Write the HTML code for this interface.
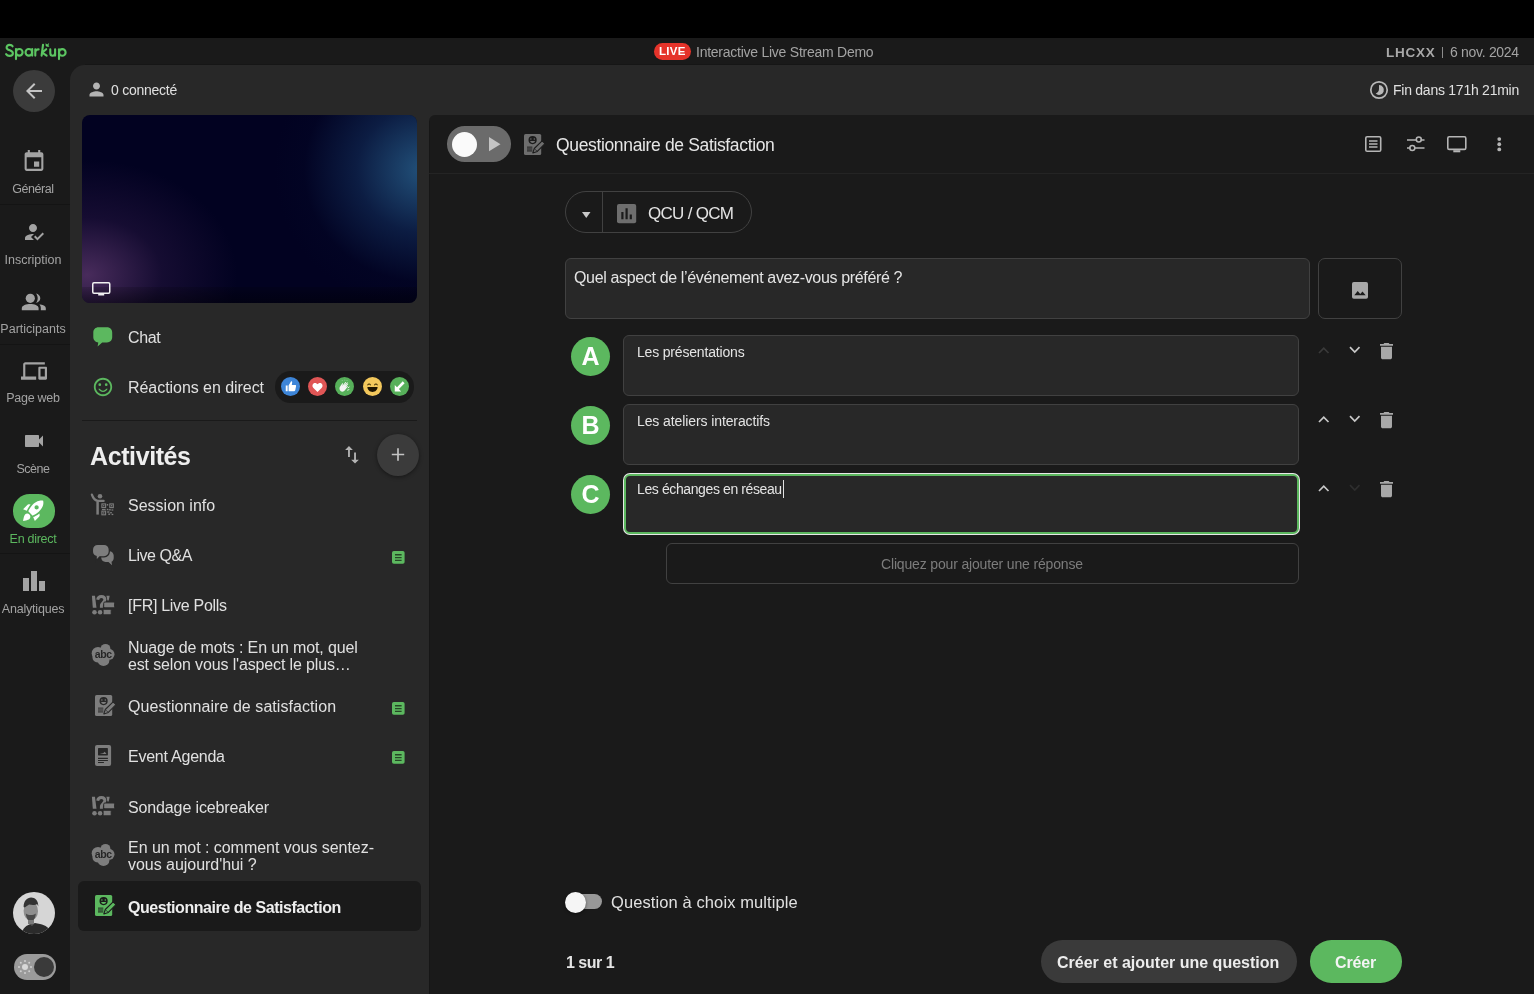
<!DOCTYPE html>
<html><head><meta charset="utf-8">
<style>
*{box-sizing:border-box;margin:0;padding:0}
html,body{width:1534px;height:994px;overflow:hidden;background:#000;font-family:"Liberation Sans",sans-serif;color:#e6e6e6;position:relative}
.a{position:absolute}
.t{white-space:nowrap;-webkit-font-smoothing:antialiased;will-change:transform}
svg{display:block;overflow:visible}
</style></head><body><div class="a" style="left:0;top:0;width:1534px;height:994px;will-change:transform">
<div class="a" style="left:0px;top:38px;width:1534px;height:956px;background:#1a1a1a;border-radius:0px;"></div>
<div class="a" style="left:85px;top:64px;width:1449px;height:1px;background:#161616;border-radius:0px;"></div>
<div class="a" style="left:70px;top:65px;width:1464px;height:929px;background:#282828;border-radius:15px 0 0 0px;"></div>
<div class="a" style="left:429px;top:115px;width:1105px;height:879px;background:#1a1a1a;border-radius:6px 0 0 0px;"></div>
<div class="a" style="left:429px;top:121px;width:1px;height:873px;background:#161616;border-radius:0px;"></div>
<div class="a" style="left:429px;top:173px;width:1105px;height:1px;background:#242424;border-radius:0px;"></div>
<svg class="a" style="left:0px;top:38px;" width="70" height="24" viewBox="0 38 70 24"><g fill="none" stroke="#5cc662" stroke-width="2.1" stroke-linecap="round" stroke-linejoin="round"><path d="M12.6 46.3C12 45.2 11 44.9 9.6 44.9 7.8 44.9 6.6 45.9 6.6 47.4 6.6 51 12.9 49.6 12.9 53.2 12.9 54.9 11.5 55.9 9.5 55.9 7.9 55.9 6.8 55.2 6.1 54.1"/><circle cx="19.3" cy="52.3" r="3.3"/><path d="M16 49V59.1"/><circle cx="28.8" cy="52.3" r="3.3"/><path d="M32.2 49V55.6"/><path d="M35.3 55.6V49.3M35.3 51.6C35.8 50 37 49.4 38.6 49.4"/><path d="M43 44.8L41.6 55.6M46.2 49.2L42.2 52.6 46.6 55.6"/><path d="M50.3 49.4V52.9C50.3 54.7 51.3 55.7 52.7 55.7 54.1 55.7 55.1 54.7 55.1 52.9V49.4M55.1 52.5V55.6"/><circle cx="62.3" cy="52.4" r="3.3"/><path d="M59 49.3V59.1"/></g><path d="M45.6 43.3l1.6 1.1 1.9-1.4-.6 2.3.9 1.4h-2.1c-1.2 0-1.9-.9-1.7-1.9z" fill="#5cc662"/></svg>
<div class="a" style="left:654px;top:42.5px;width:37px;height:17.5px;background:#e5332a;border-radius:8.75px;"></div>
<div class="a t" style="left:659.30px;top:46.00px;font-size:11.5px;line-height:11.5px;color:#ffffff;font-weight:700;letter-spacing:0.25px;">LIVE</div>
<div class="a t" style="left:696.00px;top:45.00px;font-size:14px;line-height:14px;color:#a3a3a3;font-weight:400;letter-spacing:-0.25px;">Interactive Live Stream Demo</div>
<div class="a t" style="left:1385.60px;top:46.00px;font-size:13.5px;line-height:13.5px;color:#a8a8a8;font-weight:700;letter-spacing:0.75px;">LHCXX</div>
<div class="a" style="left:1441.8px;top:47px;width:1.6px;height:10.6px;background:#8c8c8c;border-radius:0px;"></div>
<div class="a t" style="left:1449.80px;top:45.00px;font-size:14px;line-height:14px;color:#a3a3a3;font-weight:400;letter-spacing:-0.3px;">6 nov. 2024</div>
<div class="a" style="left:13px;top:70px;width:42px;height:42px;background:#3b3b3b;border-radius:21px;"></div>
<svg class="a" style="left:22px;top:79px;" width="24" height="24" viewBox="0 0 24 24"><path fill="#c4c4c4" d="M20 11H7.83l5.59-5.59L12 4l-8 8 8 8 1.41-1.41L7.83 13H20v-2z"/></svg>
<div class="a" style="left:0px;top:204px;width:70px;height:1px;background:#141414;border-radius:0px;"></div>
<div class="a" style="left:0px;top:344px;width:70px;height:1px;background:#141414;border-radius:0px;"></div>
<div class="a" style="left:0px;top:553px;width:70px;height:1px;background:#141414;border-radius:0px;"></div>
<svg class="a" style="left:21px;top:149px;" width="26" height="25" viewBox="0 0 24 24"><path fill="#a3a3a3" d="M17 12h-5v5h5v-5zM16 1v2H8V1H6v2H5c-1.11 0-1.99.9-1.99 2L3 19c0 1.1.89 2 2 2h14c1.1 0 2-.9 2-2V5c0-1.1-.9-2-2-2h-1V1h-2zm3 18H5V8h14v11z"/></svg>
<div class="a t" style="left:-1.7px;width:70px;text-align:center;top:183px;font-size:12.5px;line-height:12.5px;color:#a3a3a3;letter-spacing:-0.45px">Général</div>
<svg class="a" style="left:22px;top:220px;" width="24" height="24" viewBox="0 0 24 24"><path fill="#a3a3a3" d="M9 17l3-2.94c-.39-.04-.68-.06-1-.06-2.67 0-8 1.34-8 4v2h9l-3-3zm2-5c2.21 0 4-1.79 4-4s-1.79-4-4-4-4 1.79-4 4 1.79 4 4 4m4.47 8.5L12 17l1.4-1.41 2.07 2.08 5.13-5.17 1.4 1.41-6.6 6.59z"/></svg>
<div class="a t" style="left:-1.7px;width:70px;text-align:center;top:254px;font-size:12.5px;line-height:12.5px;color:#a3a3a3;letter-spacing:0px">Inscription</div>
<svg class="a" style="left:0px;top:280px;" width="70" height="40" viewBox="0 280 70 40"><g fill="#a3a3a3"><circle cx="30.3" cy="298.3" r="4.6"/><path d="M36 293.6c2.4.4 4.3 2.4 4.3 4.7s-1.9 4.3-4.3 4.7c1.1-1.3 1.7-2.9 1.7-4.7s-.6-3.4-1.7-4.7z"/><path d="M21.8 310.3v-2.2c0-2.6 4.6-4.1 8.5-4.1s8.3 1.5 8.3 4.1v2.2z"/><path d="M40.6 304.4c2.9.5 5.2 1.7 5.2 3.7v2.2h-5v-2.2c0-1.4-.5-2.6-1.4-3.5z"/></g></svg>
<div class="a t" style="left:-1.7px;width:70px;text-align:center;top:323px;font-size:12.5px;line-height:12.5px;color:#a3a3a3;letter-spacing:0px">Participants</div>
<svg class="a" style="left:21px;top:358px;" width="26" height="26" viewBox="0 0 24 24"><path fill="#a3a3a3" d="M4 6h18V4H4c-1.1 0-2 .9-2 2v11H0v3h14v-3H4V6zm19 2h-6c-.55 0-1 .45-1 1v10c0 .55.45 1 1 1h6c.55 0 1-.45 1-1V9c0-.55-.45-1-1-1zm-1 9h-4v-7h4v7z"/></svg>
<div class="a t" style="left:-1.7px;width:70px;text-align:center;top:392px;font-size:12.5px;line-height:12.5px;color:#a3a3a3;letter-spacing:-0.28px">Page web</div>
<svg class="a" style="left:22px;top:429px;" width="24" height="24" viewBox="0 0 24 24"><path fill="#a3a3a3" d="M17 10.5V7c0-.55-.45-1-1-1H4c-.55 0-1 .45-1 1v10c0 .55.45 1 1 1h12c.55 0 1-.45 1-1v-3.5l4 4v-11l-4 4z"/></svg>
<div class="a t" style="left:-1.7px;width:70px;text-align:center;top:463px;font-size:12.5px;line-height:12.5px;color:#a3a3a3;letter-spacing:-0.45px">Scène</div>
<div class="a" style="left:13px;top:494.4px;width:42px;height:33.4px;background:#5cb85f;border-radius:16.7px;"></div>
<svg class="a" style="left:21.4px;top:498.3px;" width="25" height="25" viewBox="0 0 24 24"><path fill="#ffffff" d="M9.19 6.35c-2.04 2.29-3.44 5.58-3.57 5.89L2 10.69l4.05-4.05c.47-.47 1.15-.68 1.81-.55l1.33.26zM11.17 17s3.74-1.55 5.89-3.7c5.4-5.4 4.5-9.62 4.21-10.57-.95-.3-5.17-1.19-10.57 4.21C8.55 9.09 7 12.83 7 12.83L11.17 17zm6.48-2.19c-2.29 2.04-5.58 3.44-5.89 3.57L13.31 22l4.05-4.05c.47-.47.68-1.15.55-1.81l-.26-1.33zM9 18c0 .83-.34 1.58-.88 2.12C6.94 21.3 2 22 2 22s.7-4.94 1.88-6.12C4.42 15.34 5.17 15 6 15c1.66 0 3 1.34 3 3zm4-9c0-1.1.9-2 2-2s2 .9 2 2-.9 2-2 2-2-.9-2-2z"/></svg>
<div class="a t" style="left:-1.7px;width:70px;text-align:center;top:533px;font-size:12.5px;line-height:12.5px;color:#5cb85f;letter-spacing:-0.28px">En direct</div>
<svg class="a" style="left:23px;top:571px;" width="22" height="20" viewBox="0 0 22 20"><path fill="#a3a3a3" d="M0 7h6v13H0zM8 0h6v20H8zM16 10h6v10h-6z"/></svg>
<div class="a t" style="left:-1.7px;width:70px;text-align:center;top:603px;font-size:12.5px;line-height:12.5px;color:#a3a3a3;letter-spacing:-0.2px">Analytiques</div>
<svg class="a" style="left:13px;top:892px;" width="42" height="42" viewBox="0 0 42 42"><defs><clipPath id="avc"><circle cx="21" cy="21" r="21"/></clipPath></defs><g clip-path="url(#avc)"><rect width="42" height="42" fill="#d6d6d6"/><path d="M8 44c1-7 5-11 10-12l4-1 5 1c6 1 11 5 13 12z" fill="#2b2b2b"/><path d="M15 31l4 3 3-3z" fill="#555"/><ellipse cx="17.8" cy="19" rx="7.2" ry="9.5" fill="#8f8f8f"/><path d="M10.6 15c0-6 3.5-9.5 7.5-9.5s7.3 3 7.2 9l-1.2-2.5c-1.5 1-4.5 1.3-8 .5l-4.5 3z" fill="#333"/><path d="M12.8 21.5c.5 5 2.5 7.8 5 7.8s4.6-2.8 5-7.8c-1.5 1.2-3 1.6-5 1.6s-3.5-.4-5-1.6z" fill="#4a4a4a"/><rect x="15" y="28" width="6" height="4" fill="#7a7a7a"/></g></svg>
<div class="a" style="left:14px;top:954px;width:42px;height:26px;background:#9b9b9b;border-radius:13px;"></div>
<div class="a" style="left:33.5px;top:957px;width:20px;height:20px;border-radius:10px;background:#3a3a3a"></div>
<svg class="a" style="left:17px;top:959px;" width="16" height="16" viewBox="0 0 16 16"><circle cx="8" cy="8" r="3" fill="#d8d8d8"/><g fill="#cfcfcf"><circle cx="8" cy="2" r="1"/><circle cx="8" cy="14" r="1"/><circle cx="2" cy="8" r="1"/><circle cx="14" cy="8" r="1"/><circle cx="3.8" cy="3.8" r="1"/><circle cx="12.2" cy="12.2" r="1"/><circle cx="3.8" cy="12.2" r="1"/><circle cx="12.2" cy="3.8" r="1"/></g></svg>
<svg class="a" style="left:86px;top:79px;" width="21" height="21" viewBox="0 0 24 24"><path fill="#b3b3b3" d="M12 12c2.21 0 4-1.79 4-4s-1.79-4-4-4-4 1.79-4 4 1.79 4 4 4zm0 2c-2.67 0-8 1.34-8 4v2h16v-2c0-2.66-5.33-4-8-4z"/></svg>
<div class="a t" style="left:111.00px;top:83.00px;font-size:14px;line-height:14px;color:#e0e0e0;font-weight:400;letter-spacing:-0.25px;">0 connecté</div>
<div class="a t" style="left:1393.00px;top:83.00px;font-size:14px;line-height:14px;color:#e0e0e0;font-weight:400;letter-spacing:-0.25px;">Fin dans 171h 21min</div>
<svg class="a" style="left:1369px;top:80px;" width="20" height="20" viewBox="0 0 20 20"><circle cx="10" cy="10" r="8.2" fill="none" stroke="#b8b8b8" stroke-width="1.7"/><path d="M10 5.1A4.9 4.9 0 1 1 6.7 13.6C8.8 12.6 10 11.2 10 9z" fill="#b8b8b8"/></svg>
<div class="a" style="left:82px;top:115px;width:335px;height:188px;border-radius:8px;overflow:hidden;background:#020221"><div class="a" style="left:0;top:0;width:335px;height:188px;background:radial-gradient(ellipse 150px 140px at 342px 55px,rgba(36,86,128,0.95),rgba(22,55,100,0.5) 45%,rgba(5,15,50,0.15) 80%,rgba(0,0,0,0) 100%)"></div><div class="a" style="left:0;top:0;width:335px;height:188px;background:radial-gradient(ellipse 150px 115px at 5px 160px,rgba(80,48,98,0.9),rgba(45,25,70,0.45) 50%,rgba(0,0,0,0) 100%)"></div><div class="a" style="left:0;top:172px;width:335px;height:16px;background:linear-gradient(rgba(0,0,0,0.15),rgba(0,0,0,0.45))"></div></div>
<svg class="a" style="left:92px;top:281.5px;" width="18.5" height="13.5" viewBox="0 0 18.5 13.5"><rect x=".75" y=".75" width="17" height="10.5" rx="1.2" fill="none" stroke="#f0f0f0" stroke-width="1.5"/><rect x="6.2" y="11.5" width="6" height="2" fill="#f0f0f0"/></svg>
<svg class="a" style="left:93px;top:326.5px;" width="20" height="20" viewBox="0 0 20 20"><path fill="#5cb85f" d="M5.5 0.3h8.5c3 0 5.2 2.2 5.2 5.2v4.8c0 3-2.2 5.2-5.2 5.2H9.2L4.6 19.6l.7-4.1C2.5 15.2.3 13.2.3 10.3V5.5C.3 2.5 2.5.3 5.5.3z"/></svg>
<div class="a t" style="left:127.50px;top:330.00px;font-size:16px;line-height:16px;color:#e0e0e0;font-weight:400;letter-spacing:-0.35px;">Chat</div>
<svg class="a" style="left:91.5px;top:375.5px;" width="22" height="22" viewBox="0 0 24 24"><path fill="#5cb85f" d="M15.5 9.5m-1.5 0a1.5 1.5 0 1 0 3 0a1.5 1.5 0 1 0-3 0M8.5 9.5m-1.5 0a1.5 1.5 0 1 0 3 0a1.5 1.5 0 1 0-3 0M11.99 2C6.47 2 2 6.48 2 12s4.47 10 9.99 10C17.52 22 22 17.52 22 12S17.52 2 11.99 2zM12 20c-4.42 0-8-3.58-8-8s3.58-8 8-8 8 3.58 8 8-3.58 8-8 8zm0-4c-1.48 0-2.75-.81-3.45-2H6.88c.8 2.05 2.79 3.5 5.12 3.5s4.32-1.45 5.12-3.5h-1.67c-.7 1.19-1.97 2-3.45 2z"/></svg>
<div class="a t" style="left:127.50px;top:380.00px;font-size:16px;line-height:16px;color:#e0e0e0;font-weight:400;letter-spacing:-0.05px;">Réactions en direct</div>
<div class="a" style="left:274.5px;top:371px;width:139.5px;height:31.5px;background:#1a1a1a;border-radius:15.7px;"></div>
<svg class="a" style="left:280.7px;top:377px" width="19" height="19" viewBox="0 0 20 20"><circle cx="10" cy="10" r="10" fill="#3d85d8"/><path fill="#fff" d="M5 9h2v6H5zM8 9l2.5-4.2c.4-.6 1.3-.3 1.3.4L11.4 8.3H15c.6 0 1 .5.9 1.1l-.9 4.6c-.1.5-.5.9-1 .9H8z"/></svg>
<svg class="a" style="left:307.8px;top:377px" width="19" height="19" viewBox="0 0 20 20"><circle cx="10" cy="10" r="10" fill="#e05656"/><path fill="#fff" d="M10 15.8l-4.3-4.2C4.1 10 4.4 7.2 6.5 6.4c1.4-.5 2.7.1 3.5 1.3.8-1.2 2.1-1.8 3.5-1.3 2.1.8 2.4 3.6.8 5.2z"/></svg>
<svg class="a" style="left:335.1px;top:377px" width="19" height="19" viewBox="0 0 20 20"><circle cx="10" cy="10" r="10" fill="#57b05a"/><path fill="#f4f4f4" d="M6.2 15c-1.6-1.4-1.9-3.3-1-4.7l2.5-3.6c.4-.5 1 0 .8.5L7.6 9.4l3.2-3.9c.4-.5 1.1.1.8.6L9.3 9.2l3.3-3.5c.4-.4 1 .1.7.6l-2.6 3.2 2.5-2.5c.4-.4 1 .1.6.6L11 11.2l1.7-1.5c.4-.4 1 .1.7.6l-2.8 3.5C9.3 15.5 7.5 16 6.2 15z"/><path d="M13.5 11.5l1.8-1.2M12.8 14l2.3-.9" stroke="#f4f4f4" stroke-width=".9"/><path d="M7.5 3.2l.3 1M10.2 2.8v1M12.8 3.2l-.3 1" stroke="#9ad49c" stroke-width=".7"/></svg>
<svg class="a" style="left:362.5px;top:377px" width="19" height="19" viewBox="0 0 20 20"><circle cx="10" cy="10" r="10" fill="#f3c85c"/><path d="M5 8.3c.6-1.2 2.2-1.2 2.8 0M12.2 8.3c.6-1.2 2.2-1.2 2.8 0" fill="none" stroke="#3a2a00" stroke-width="1.1" stroke-linecap="round"/><path d="M4.6 10.6h10.8c-.2 3-2.4 5.2-5.4 5.2s-5.2-2.2-5.4-5.2z" fill="#1e1400"/></svg>
<svg class="a" style="left:389.5px;top:377px" width="19" height="19" viewBox="0 0 20 20"><circle cx="10" cy="10" r="10" fill="#57b05a"/><path fill="#fff" d="M5 15.2V8.4l2.4 2.3 6-6.1 2 2-6 6.1 2.3 2.5z"/></svg>
<div class="a" style="left:82px;top:419.5px;width:335px;height:1.5px;background:#1a1a1a;border-radius:0px;"></div>
<div class="a t" style="left:90.00px;top:444.00px;font-size:25px;line-height:25px;color:#eeeeee;font-weight:700;letter-spacing:-0.4px;">Activités</div>
<svg class="a" style="left:341.2px;top:443.8px;" width="22" height="22" viewBox="0 0 24 24"><path fill="#b4b4b4" d="M16.3 17.1V9.3h-2v7.8h-3.2l4.2 4.3 4.2-4.3zM8.7 2.2L4.5 6.5h3.2v7.8h2V6.5h3.2z"/></svg>
<div class="a" style="left:377px;top:434px;width:42px;height:42px;border-radius:21px;background:#3b3b3b;box-shadow:0 1px 4px rgba(0,0,0,0.45)"></div>
<svg class="a" style="left:388px;top:445px;" width="20" height="20" viewBox="0 0 20 20"><path d="M10 3.3v12.4M3.8 9.5h12.4" stroke="#c4c4c4" stroke-width="1.7"/></svg>
<div class="a" style="left:78.2px;top:881.2px;width:342.8px;height:49.8px;background:#1a1a1a;border-radius:6px;"></div>
<svg class="a" style="left:88px;top:490px;" width="30" height="30" viewBox="88 490 30 30"><g fill="none" stroke="#7d7d7d" stroke-linecap="round"><path d="M91.9 494.6C92.9 497.6 94.6 500.1 97.6 500.9H103.6" stroke-width="2.3"/><path d="M97.6 501.5V514.6" stroke-width="2.5" stroke-linecap="butt"/><rect x="101.9" y="503.9" width="3.7" height="3.7" stroke-width="1.1"/><rect x="109.8" y="503.9" width="3.5" height="3.7" stroke-width="1.1"/><rect x="101.9" y="511.1" width="3.7" height="3.7" stroke-width="1.1"/></g><circle cx="100" cy="496.3" r="2.3" fill="#7d7d7d"/><g fill="#7d7d7d"><rect x="103.1" y="505.1" width="1.3" height="1.3"/><rect x="111" y="505.1" width="1.2" height="1.3"/><rect x="103.1" y="512.3" width="1.3" height="1.3"/><rect x="106.8" y="504" width="1.4" height="1.6"/><rect x="106.8" y="508.8" width="1.4" height="1.4"/><rect x="101.9" y="509" width="3.7" height="1"/><rect x="108.6" y="509.2" width="2.2" height="1.2"/><rect x="111.5" y="509.4" width="1.8" height="1.2"/><rect x="107.2" y="511.3" width="2.2" height="1.4"/><rect x="110.2" y="512" width="1.6" height="1.4"/><rect x="108.3" y="513.5" width="1.8" height="1.4"/><rect x="111.6" y="513.8" width="1.7" height="1.3"/></g></svg>
<div class="a t" style="left:127.50px;top:498.00px;font-size:16px;line-height:16px;color:#e0e0e0;font-weight:400;letter-spacing:0px;">Session info</div>
<svg class="a" style="left:88px;top:540px;" width="30" height="30" viewBox="88 540 30 30"><path d="M105.6 551.2h3.7c2.5 0 4.4 1.9 4.4 4.4v2.4c0 1.7-.9 3.1-2.2 3.8l.5 3.5-3.5-3.3h-2.9c-2.5 0-4.4-1.9-4.4-4.4v-2c0-2.5 1.9-4.4 4.4-4.4z" fill="#7d7d7d"/><path d="M97.6 544.3h6.5c2.9 0 5.2 2.3 5.2 5.2v2.1c0 2.9-2.3 5.2-5.2 5.2h-4.3l-3.6 4-.1-4.3c-2.2-.6-3.7-2.6-3.7-4.9v-2.1c0-2.9 2.3-5.2 5.2-5.2z" fill="#7d7d7d" stroke="#282828" stroke-width="1.3"/></svg>
<div class="a t" style="left:127.50px;top:548.00px;font-size:16px;line-height:16px;color:#e0e0e0;font-weight:400;letter-spacing:-0.45px;">Live Q&amp;A</div>
<svg class="a" style="left:391.5px;top:550.6999999999999px;" width="12.6" height="12.8" viewBox="0 0 12.6 12.8"><rect width="12.6" height="12.8" rx="1.8" fill="#5cb85f"/><path d="M3 3.1h6.6v1.3H3zM3 5.9h6.6v1.3H3zM3 8.7h6.6v1.3H3z" fill="#264626"/></svg>
<svg class="a" style="left:90.0px;top:595.0px;" width="25" height="21" viewBox="0 0 25 21"><g fill="#7d7d7d"><path d="M1.9 .7H5L6.5 12.8H2.8z"/><circle cx="4.5" cy="17.3" r="2.3"/><circle cx="10.1" cy="17.3" r="2.3"/><path d="M16.4 .7h3.3l-1 4.9h-1.3z"/></g><path d="M7.7 4.7C8 2.4 9.6 1.4 11.3 1.4c2.2 0 3.6 1.4 3.6 3.2 0 2.8-3.5 3.2-3.5 6.2v2" fill="none" stroke="#7d7d7d" stroke-width="3"/><rect x="13.7" y="7" width="10.9" height="5.8" rx="1.2" fill="#7d7d7d" stroke="#282828" stroke-width="1"/><rect x="13.1" y="14.3" width="8.1" height="5.5" rx="1" fill="#7d7d7d" stroke="#282828" stroke-width="1"/></svg>
<div class="a t" style="left:127.50px;top:598.00px;font-size:16px;line-height:16px;color:#e0e0e0;font-weight:400;letter-spacing:-0.29px;">[FR] Live Polls</div>
<svg class="a" style="left:88.0px;top:640.0px;" width="25" height="24" viewBox="88 640 25 24"><g fill="#7d7d7d"><circle cx="105.5" cy="648.8" r="4.9"/><circle cx="98" cy="653.2" r="6.3"/><circle cx="109" cy="654.3" r="5.5"/><circle cx="103.5" cy="660.2" r="5.9"/><circle cx="97.5" cy="657.5" r="5"/></g><text x="103.2" y="657.9" text-anchor="middle" font-family="Liberation Sans" font-weight="700" font-size="10.5" fill="#262626" letter-spacing="-0.45">abc</text></svg>
<div class="a t" style="left:127.50px;top:640.00px;font-size:16px;line-height:16px;color:#e0e0e0;font-weight:400;letter-spacing:-0.14px;">Nuage de mots : En un mot, quel</div>
<div class="a t" style="left:127.50px;top:657.00px;font-size:16px;line-height:16px;color:#e0e0e0;font-weight:400;letter-spacing:-0.14px;">est selon vous l'aspect le plus…</div>
<svg class="a" style="left:94.7px;top:694.9px;" width="21" height="21.5" viewBox="0 0 21 21.5"><rect x="0" y="0" width="17.2" height="21.1" rx="1.6" fill="#7d7d7d"/><circle cx="8.6" cy="6.1" r="4.1" fill="#282828"/><circle cx="6.9" cy="4.9" r=".75" fill="#7d7d7d"/><circle cx="10.3" cy="4.9" r=".75" fill="#7d7d7d"/><path d="M6.1 6.9h5c-.3 1.3-1.3 2-2.5 2s-2.2-.7-2.5-2z" fill="#7d7d7d"/><rect x="3" y="12.3" width="5.3" height="5.7" fill="#282828" opacity=".3"/><path d="M3 13.2h5.3M3 15h5.3M3 16.8h5.3" stroke="#282828" stroke-width=".6"/><path d="M18.1 6.8L21 9.7 13.3 17.4 8.8 18.9 10.3 14.5Z" fill="#7d7d7d" stroke="#282828" stroke-width="1.1" stroke-linejoin="round"/><path d="M11.2 15.4l1.4 1.4" stroke="#282828" stroke-width="1"/></svg>
<div class="a t" style="left:127.50px;top:699.00px;font-size:16px;line-height:16px;color:#e0e0e0;font-weight:400;letter-spacing:0.06px;">Questionnaire de satisfaction</div>
<svg class="a" style="left:391.5px;top:701.5px;" width="12.6" height="12.8" viewBox="0 0 12.6 12.8"><rect width="12.6" height="12.8" rx="1.8" fill="#5cb85f"/><path d="M3 3.1h6.6v1.3H3zM3 5.9h6.6v1.3H3zM3 8.7h6.6v1.3H3z" fill="#264626"/></svg>
<svg class="a" style="left:88px;top:740px;" width="30" height="30" viewBox="88 740 30 30"><rect x="95" y="745" width="16.1" height="21" rx="2" fill="#7d7d7d"/><rect x="98" y="748.1" width="9.9" height="7.3" rx=".6" fill="#262626"/><path d="M99.8 754.1l1.8-.6 1.5-.2 1.6-1.6 1.8 2.4z" fill="#7d7d7d"/><path d="M98 757.7h9.9v1.2H98zM98 759.9h9.9v1.2H98zM98 761.9h5.9v1.2H98z" fill="#262626"/></svg>
<div class="a t" style="left:127.50px;top:749.00px;font-size:16px;line-height:16px;color:#e0e0e0;font-weight:400;letter-spacing:-0.24px;">Event Agenda</div>
<svg class="a" style="left:391.5px;top:751.3px;" width="12.6" height="12.8" viewBox="0 0 12.6 12.8"><rect width="12.6" height="12.8" rx="1.8" fill="#5cb85f"/><path d="M3 3.1h6.6v1.3H3zM3 5.9h6.6v1.3H3zM3 8.7h6.6v1.3H3z" fill="#264626"/></svg>
<svg class="a" style="left:90.0px;top:795.5px;" width="25" height="21" viewBox="0 0 25 21"><g fill="#7d7d7d"><path d="M1.9 .7H5L6.5 12.8H2.8z"/><circle cx="4.5" cy="17.3" r="2.3"/><circle cx="10.1" cy="17.3" r="2.3"/><path d="M16.4 .7h3.3l-1 4.9h-1.3z"/></g><path d="M7.7 4.7C8 2.4 9.6 1.4 11.3 1.4c2.2 0 3.6 1.4 3.6 3.2 0 2.8-3.5 3.2-3.5 6.2v2" fill="none" stroke="#7d7d7d" stroke-width="3"/><rect x="13.7" y="7" width="10.9" height="5.8" rx="1.2" fill="#7d7d7d" stroke="#282828" stroke-width="1"/><rect x="13.1" y="14.3" width="8.1" height="5.5" rx="1" fill="#7d7d7d" stroke="#282828" stroke-width="1"/></svg>
<div class="a t" style="left:127.50px;top:800.00px;font-size:16px;line-height:16px;color:#e0e0e0;font-weight:400;letter-spacing:-0.13px;">Sondage icebreaker</div>
<svg class="a" style="left:88.4px;top:840.2px;" width="25" height="24" viewBox="88 640 25 24"><g fill="#7d7d7d"><circle cx="105.5" cy="648.8" r="4.9"/><circle cx="98" cy="653.2" r="6.3"/><circle cx="109" cy="654.3" r="5.5"/><circle cx="103.5" cy="660.2" r="5.9"/><circle cx="97.5" cy="657.5" r="5"/></g><text x="103.2" y="657.9" text-anchor="middle" font-family="Liberation Sans" font-weight="700" font-size="10.5" fill="#262626" letter-spacing="-0.45">abc</text></svg>
<div class="a t" style="left:127.50px;top:840.00px;font-size:16px;line-height:16px;color:#e0e0e0;font-weight:400;letter-spacing:-0.04px;">En un mot : comment vous sentez-</div>
<div class="a t" style="left:127.50px;top:857.00px;font-size:16px;line-height:16px;color:#e0e0e0;font-weight:400;letter-spacing:-0.04px;">vous aujourd'hui ?</div>
<svg class="a" style="left:94.6px;top:895.3px;" width="21" height="21.5" viewBox="0 0 21 21.5"><rect x="0" y="0" width="17.2" height="21.1" rx="1.6" fill="#5cb85f"/><circle cx="8.6" cy="6.1" r="4.1" fill="#1b1b1b"/><circle cx="6.9" cy="4.9" r=".75" fill="#5cb85f"/><circle cx="10.3" cy="4.9" r=".75" fill="#5cb85f"/><path d="M6.1 6.9h5c-.3 1.3-1.3 2-2.5 2s-2.2-.7-2.5-2z" fill="#5cb85f"/><rect x="3" y="12.3" width="5.3" height="5.7" fill="#1b1b1b" opacity=".3"/><path d="M3 13.2h5.3M3 15h5.3M3 16.8h5.3" stroke="#1b1b1b" stroke-width=".6"/><path d="M18.1 6.8L21 9.7 13.3 17.4 8.8 18.9 10.3 14.5Z" fill="#5cb85f" stroke="#1b1b1b" stroke-width="1.1" stroke-linejoin="round"/><path d="M11.2 15.4l1.4 1.4" stroke="#1b1b1b" stroke-width="1"/></svg>
<div class="a t" style="left:127.50px;top:900.00px;font-size:16px;line-height:16px;color:#eeeeee;font-weight:700;letter-spacing:-0.45px;">Questionnaire de Satisfaction</div>
<div class="a" style="left:446.8px;top:126.4px;width:64.2px;height:35.5px;background:#6b6b6b;border-radius:17.75px;"></div>
<div class="a" style="left:452px;top:131.5px;width:25.3px;height:25.3px;background:#fafafa;border-radius:12.65px;"></div>
<svg class="a" style="left:489px;top:137px;" width="11.5" height="14.3" viewBox="0 0 11.5 14.3"><path d="M0 0L11.5 7.15 0 14.3z" fill="#c4c4c4"/></svg>
<svg class="a" style="left:524px;top:133.5px;" width="21" height="21.5" viewBox="0 0 21 21.5"><rect x="0" y="0" width="17.2" height="21.1" rx="1.6" fill="#6e6e6e"/><circle cx="8.6" cy="6.1" r="4.1" fill="#1b1b1b"/><circle cx="6.9" cy="4.9" r=".75" fill="#6e6e6e"/><circle cx="10.3" cy="4.9" r=".75" fill="#6e6e6e"/><path d="M6.1 6.9h5c-.3 1.3-1.3 2-2.5 2s-2.2-.7-2.5-2z" fill="#6e6e6e"/><rect x="3" y="12.3" width="5.3" height="5.7" fill="#1b1b1b" opacity=".3"/><path d="M3 13.2h5.3M3 15h5.3M3 16.8h5.3" stroke="#1b1b1b" stroke-width=".6"/><path d="M18.1 6.8L21 9.7 13.3 17.4 8.8 18.9 10.3 14.5Z" fill="#6e6e6e" stroke="#1b1b1b" stroke-width="1.1" stroke-linejoin="round"/><path d="M11.2 15.4l1.4 1.4" stroke="#1b1b1b" stroke-width="1"/></svg>
<div class="a t" style="left:555.50px;top:137.00px;font-size:17.5px;line-height:17.5px;color:#e6e6e6;font-weight:400;letter-spacing:-0.35px;">Questionnaire de Satisfaction</div>
<svg class="a" style="left:1365.3px;top:136px;" width="16.5" height="16" viewBox="0 0 16.5 16"><rect x=".8" y=".8" width="14.9" height="14.4" rx="1.3" fill="none" stroke="#b5b5b5" stroke-width="1.6"/><path d="M4 4.2h8.5v1.5H4zM4 7.2h8.5v1.5H4zM4 10.2h8.5v1.5H4z" fill="#b5b5b5"/></svg>
<svg class="a" style="left:1406.5px;top:136px;" width="17.5" height="16" viewBox="0 0 17.5 16"><g fill="none" stroke="#b5b5b5" stroke-width="1.5"><path d="M0 4h10M13.6 4h3.9"/><circle cx="11.8" cy="3.5" r="2.5"/><path d="M0 12h3.5M7.3 12h10.2"/><circle cx="5.3" cy="12" r="2.5"/></g></svg>
<svg class="a" style="left:1447.4px;top:136px;" width="19.6" height="16.5" viewBox="0 0 19.6 16.5"><rect x=".8" y=".8" width="18" height="12.6" rx="1.4" fill="none" stroke="#b5b5b5" stroke-width="1.6"/><rect x="6.3" y="14.2" width="7" height="2.1" fill="#b5b5b5"/></svg>
<svg class="a" style="left:1496.8px;top:137px;" width="4.5" height="14.5" viewBox="0 0 4.5 14.5"><circle cx="2.25" cy="2.1" r="1.9" fill="#b5b5b5"/><circle cx="2.25" cy="7.25" r="1.9" fill="#b5b5b5"/><circle cx="2.25" cy="12.4" r="1.9" fill="#b5b5b5"/></svg>
<div class="a" style="left:565px;top:191px;width:187px;height:42px;border-radius:21px;border:1px solid #414141"></div>
<div class="a" style="left:602px;top:191.5px;width:1px;height:41px;background:#414141;border-radius:0px;"></div>
<svg class="a" style="left:582px;top:211.5px;" width="8.5" height="6" viewBox="0 0 8.5 6"><path d="M0 0h8.5L4.25 6z" fill="#c8c8c8"/></svg>
<svg class="a" style="left:617px;top:203.5px;" width="19.2" height="19.2" viewBox="0 0 19.2 19.2"><rect width="19.2" height="19.2" rx="2" fill="#6e6e6e"/><path d="M4.3 8h2.2v7.2H4.3zM8.5 4.3h2.2v10.9H8.5zM12.7 10.5h2.2v4.7h-2.2z" fill="#1b1b1b"/></svg>
<div class="a t" style="left:647.80px;top:205.00px;font-size:17px;line-height:17px;color:#e4e4e4;font-weight:400;letter-spacing:-0.7px;">QCU / QCM</div>
<div class="a" style="left:565px;top:258px;width:745px;height:60.5px;border-radius:6px;border:1px solid #414141;background:#282828"></div>
<div class="a t" style="left:574.00px;top:270.00px;font-size:16px;line-height:16px;color:#e4e4e4;font-weight:400;letter-spacing:-0.35px;">Quel aspect de l’événement avez-vous préféré ?</div>
<div class="a" style="left:1318.2px;top:258px;width:83.8px;height:60.7px;border-radius:7px;border:1px solid #414141"></div>
<svg class="a" style="left:1352px;top:282px;" width="16" height="16.7" viewBox="0 0 16 16.7"><rect width="16" height="16.7" rx="1.8" fill="#a8a8a8"/><path d="M2.3 13.3l3.4-4.3 2.5 3 2.3-2.6 3.2 3.9z" fill="#1b1b1b"/></svg>
<div class="a" style="left:570.5px;top:336.59999999999997px;width:39.2px;height:39.2px;background:#5cb85f;border-radius:19.6px;"></div>
<div class="a t" style="left:570.5px;width:39.2px;text-align:center;top:343.54px;font-size:25px;line-height:25px;font-weight:700;color:#fff">A</div>
<div class="a" style="left:623.4px;top:335.2px;width:675.6px;height:60.5px;border-radius:6px;border:1px solid #414141;background:#282828"></div>
<div class="a t" style="left:636.80px;top:345.00px;font-size:14px;line-height:14px;color:#e4e4e4;font-weight:400;letter-spacing:-0.18px;">Les présentations</div>
<svg class="a" style="left:1317.5px;top:346px;" width="11.5" height="8" viewBox="0 0 11.5 8"><path d="M1 7L5.75 2.2 10.5 7" fill="none" stroke="#3a3a3a" stroke-width="1.7"/></svg>
<svg class="a" style="left:1349px;top:346px;" width="11.5" height="8" viewBox="0 0 11.5 8"><path d="M1 1.2L5.75 6 10.5 1.2" fill="none" stroke="#c8c8c8" stroke-width="1.7"/></svg>
<svg class="a" style="left:1379.7px;top:343.2px;" width="13" height="16.2" viewBox="0 0 13 16.2"><path d="M4.3 0h4.4l.8 1H13v1.8H0V1h3.5z" fill="#a8a8a8"/><path d="M1 3.8h11v10.6c0 1-.8 1.8-1.8 1.8H2.8c-1 0-1.8-.8-1.8-1.8z" fill="#a8a8a8"/></svg>
<div class="a" style="left:570.5px;top:405.59999999999997px;width:39.2px;height:39.2px;background:#5cb85f;border-radius:19.6px;"></div>
<div class="a t" style="left:570.5px;width:39.2px;text-align:center;top:412.54px;font-size:25px;line-height:25px;font-weight:700;color:#fff">B</div>
<div class="a" style="left:623.4px;top:404.2px;width:675.6px;height:60.5px;border-radius:6px;border:1px solid #414141;background:#282828"></div>
<div class="a t" style="left:636.80px;top:414.00px;font-size:14px;line-height:14px;color:#e4e4e4;font-weight:400;letter-spacing:-0.1px;">Les ateliers interactifs</div>
<svg class="a" style="left:1317.5px;top:415px;" width="11.5" height="8" viewBox="0 0 11.5 8"><path d="M1 7L5.75 2.2 10.5 7" fill="none" stroke="#c8c8c8" stroke-width="1.7"/></svg>
<svg class="a" style="left:1349px;top:415px;" width="11.5" height="8" viewBox="0 0 11.5 8"><path d="M1 1.2L5.75 6 10.5 1.2" fill="none" stroke="#c8c8c8" stroke-width="1.7"/></svg>
<svg class="a" style="left:1379.7px;top:412.2px;" width="13" height="16.2" viewBox="0 0 13 16.2"><path d="M4.3 0h4.4l.8 1H13v1.8H0V1h3.5z" fill="#a8a8a8"/><path d="M1 3.8h11v10.6c0 1-.8 1.8-1.8 1.8H2.8c-1 0-1.8-.8-1.8-1.8z" fill="#a8a8a8"/></svg>
<div class="a" style="left:570.5px;top:474.59999999999997px;width:39.2px;height:39.2px;background:#5cb85f;border-radius:19.6px;"></div>
<div class="a t" style="left:570.5px;width:39.2px;text-align:center;top:481.54px;font-size:25px;line-height:25px;font-weight:700;color:#fff">C</div>
<div class="a t" style="left:636.80px;top:483.00px;font-size:14px;line-height:14px;color:#e4e4e4;font-weight:400;letter-spacing:-0.39px;">Les échanges en réseau</div>
<svg class="a" style="left:1317.5px;top:484px;" width="11.5" height="8" viewBox="0 0 11.5 8"><path d="M1 7L5.75 2.2 10.5 7" fill="none" stroke="#c8c8c8" stroke-width="1.7"/></svg>
<svg class="a" style="left:1349px;top:484px;" width="11.5" height="8" viewBox="0 0 11.5 8"><path d="M1 1.2L5.75 6 10.5 1.2" fill="none" stroke="#2e2e2e" stroke-width="1.7"/></svg>
<svg class="a" style="left:1379.7px;top:481.2px;" width="13" height="16.2" viewBox="0 0 13 16.2"><path d="M4.3 0h4.4l.8 1H13v1.8H0V1h3.5z" fill="#a8a8a8"/><path d="M1 3.8h11v10.6c0 1-.8 1.8-1.8 1.8H2.8c-1 0-1.8-.8-1.8-1.8z" fill="#a8a8a8"/></svg>
<div class="a" style="left:622.6px;top:472.5px;width:677.2px;height:62.3px;border-radius:7px;background:#e8e8e8"></div>
<div class="a" style="left:623.6px;top:473.5px;width:675.2px;height:60.3px;border-radius:6px;border:2.2px solid #5cb85f;background:#282828"></div>
<div class="a t" style="left:636.80px;top:482.00px;font-size:14px;line-height:14px;color:#e4e4e4;font-weight:400;letter-spacing:-0.39px;">Les échanges en réseau</div>
<div class="a" style="left:783.2px;top:480.3px;width:1.2px;height:18px;background:#e0e0e0;border-radius:0px;"></div>
<div class="a" style="left:665.6px;top:543px;width:633.4px;height:41px;border-radius:6px;border:1px solid #414141"></div>
<div class="a t" style="left:880.50px;top:557.00px;font-size:14px;line-height:14px;color:#7c7c7c;font-weight:400;letter-spacing:-0.16px;">Cliquez pour ajouter une réponse</div>
<div class="a" style="left:570.3px;top:894.4px;width:31.8px;height:14.8px;background:#989898;border-radius:7.4px;"></div>
<div class="a" style="left:564.8px;top:891.5px;width:21.2px;height:21.2px;border-radius:11px;background:#f5f5f5;box-shadow:0 1px 3px rgba(0,0,0,0.5)"></div>
<div class="a t" style="left:611.00px;top:894.00px;font-size:16.5px;line-height:16.5px;color:#e0e0e0;font-weight:400;letter-spacing:0.1px;">Question à choix multiple</div>
<div class="a t" style="left:565.80px;top:955.00px;font-size:16px;line-height:16px;color:#e4e4e4;font-weight:700;letter-spacing:-0.5px;">1 sur 1</div>
<div class="a" style="left:1040.7px;top:940.2px;width:256.3px;height:42.7px;background:#3a3a3a;border-radius:21.35px;"></div>
<div class="a t" style="left:1056.80px;top:955.00px;font-size:16px;line-height:16px;color:#ececec;font-weight:700;letter-spacing:0px;">Créer et ajouter une question</div>
<div class="a" style="left:1309.9px;top:940.2px;width:91.9px;height:42.7px;background:#5cb85f;border-radius:21.35px;"></div>
<div class="a t" style="left:1334.60px;top:955.00px;font-size:16px;line-height:16px;color:#f4f4f4;font-weight:700;letter-spacing:-0.15px;">Créer</div>
</div></body></html>
